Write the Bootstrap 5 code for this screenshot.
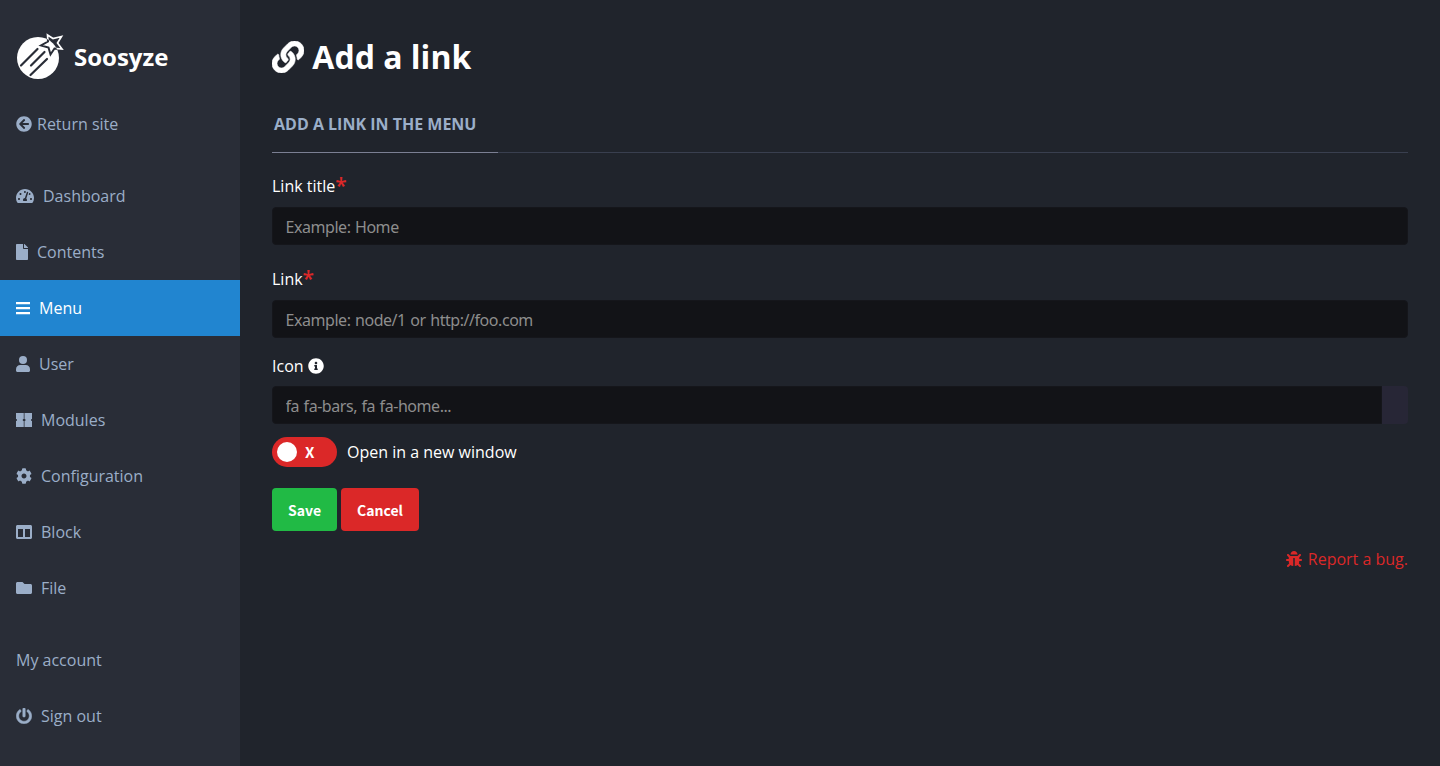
<!DOCTYPE html>
<html lang="en">
<head>
<meta charset="utf-8">
<title>Add a link - Soosyze</title>
<link href="https://cdn.jsdelivr.net/npm/bootstrap@5.3.0/dist/css/bootstrap.min.css" rel="stylesheet">
<style>
body{background:#20242c;color:#fff;font:16px/24px "Open Sans","Noto Sans",sans-serif;overflow:hidden}
.ic{height:1em;fill:currentColor;vertical-align:-.125em}
.side{width:240px;background:#292d37}
.brand{height:96px;padding-top:18px}
.brand-name{font-size:24px;margin-left:10px}
.side .nav-link{color:#9baec8;padding:16px;height:56px;line-height:24px;white-space:pre}
.side .nav-link.active{background:#2185d0;color:#fff}
.side .nav-link .ic{margin-right:9px}
.side .nav-link .ic-near{margin-right:5px}
h1{font-size:32px;line-height:48px;margin:33px 0 0}
.legend-tab{width:226px;height:48px;padding:7px 2px 0;border-bottom:1px solid #7b7f93;color:#9baec8;font-weight:700;margin-bottom:-1px}
.legend-row{border-bottom:1px solid #393f4f;margin-top:24px;height:48px}
.form-control,.form-control:focus{background:#121317;border:1px solid #15161b;border-radius:4px;height:38px;padding:7px 13px 5px 12.500px;color:#fff;font:16px/24px "Noto Sans",sans-serif;letter-spacing:-.45px;word-spacing:.8px}
.form-control::placeholder{color:#8d8d8d;opacity:1}
.req{color:#db2828;font-size:21px;font-weight:600;line-height:20px;vertical-align:-1px}
.field-label{line-height:24px;height:24px;display:block}
.pick{width:26px;background:#272636;border-radius:0 4px 4px 0}
.toggle{width:65px;height:30px;border-radius:15px;background:#db2828;padding:5px}
.knob{width:20px;height:20px;border-radius:50%;background:#fff}
.cross{font:bold 15px/20px "Noto Sans CJK JP",sans-serif;margin-left:8px}
.btn{height:43px;border:0;border-radius:4px;padding:1px 16px 0;font:bold 14px/20px "Noto Sans CJK JP",sans-serif}
.btn,.btn:hover{color:#fff}
.btn-save{background:#21ba45;width:65px}.btn-cancel{background:#db2828;width:78px}
.bug{color:#db2828}
.bug .ic{margin-right:2px}
</style>
</head>
<body>
<div class="d-flex vh-100">
<aside class="side flex-shrink-0">
  <div class="brand d-flex align-items-center px-3">
    <svg width="48" height="48" viewBox="0 0 48 48">
      <defs>
        <clipPath id="disc"><circle cx="22" cy="25" r="21"/></clipPath>
        <path id="star" d="M31.500 2 37 5.500 45.500 3.500 41.500 10 46 16 38.500 15.500 34.500 21.500 32.500 14.500 25 12.500 32 8.500Z"/>
      </defs>
      <use href="#star" fill="none" stroke="#fff" stroke-width="1.700"/>
      <circle cx="22" cy="25" r="21" fill="#fff"/>
      <g stroke="#292d37" stroke-width="2.200" stroke-linecap="round"><path d="M21.500 16 5 32.500M28.500 19 15 32.500M31 26 14.500 42"/></g>
      <use href="#star" fill="none" stroke="#292d37" stroke-width="2" clip-path="url(#disc)"/>
    </svg>
    <strong class="brand-name">Soosyze</strong>
  </div>
  <nav class="nav flex-column flex-nowrap">
    <a class="nav-link mb-3" href="#"><svg class="ic ic-near" viewBox="0 0 512 512"><path d="M256 504C119 504 8 393 8 256S119 8 256 8s248 111 248 248-111 248-248 248zm28.900-143.600L209.400 288H392c13.300 0 24-10.700 24-24v-16c0-13.300-10.700-24-24-24H209.400l75.500-72.400c9.700-9.300 9.900-24.800.400-34.300l-11-10.900c-9.400-9.400-24.600-9.400-33.900 0L107.700 239c-9.400 9.400-9.400 24.600 0 33.900l132.700 132.700c9.400 9.400 24.600 9.400 33.900 0l11-10.900c9.500-9.500 9.300-25-.400-34.300z"/></svg>Return site</a>
    <a class="nav-link" href="#"><svg class="ic" viewBox="0 0 576 512"><path d="M288 32C128.940 32 0 160.940 0 320c0 52.800 14.250 102.260 39.060 144.800 5.610 9.620 16.300 15.200 27.440 15.200h443c11.140 0 21.830-5.580 27.440-15.200C561.750 422.260 576 372.800 576 320c0-159.060-128.940-288-288-288zm0 64c14.710 0 26.580 10.130 30.320 23.650-1.110 2.260-2.640 4.230-3.450 6.670l-9.220 27.670c-5.130 3.490-10.970 6.010-17.640 6.010-17.670 0-32-14.330-32-32S270.330 96 288 96zM96 384c-17.670 0-32-14.330-32-32s14.330-32 32-32 32 14.330 32 32-14.330 32-32 32zm48-160c-17.670 0-32-14.330-32-32s14.330-32 32-32 32 14.330 32 32-14.330 32-32 32zm246.770-72.410l-61.330 184C343.130 347.330 352 364.540 352 384c0 11.720-3.380 22.550-8.880 32H232.880c-5.500-9.450-8.880-20.280-8.880-32 0-33.940 26.500-61.430 59.900-63.590l61.340-184.010c4.170-12.560 17.730-19.450 30.360-15.170 12.570 4.190 19.350 17.790 15.170 30.360zm14.660 57.200l15.520-46.550c3.470-1.290 7.130-2.230 11.050-2.230 17.670 0 32 14.330 32 32s-14.330 32-32 32c-11.380-.010-20.890-6.280-26.570-15.220zM480 384c-17.670 0-32-14.330-32-32s14.330-32 32-32 32 14.330 32 32-14.330 32-32 32z"/></svg>Dashboard</a>
    <a class="nav-link" href="#"><svg class="ic" viewBox="0 0 384 512"><path d="M224 136V0H24C10.700 0 0 10.700 0 24v464c0 13.300 10.700 24 24 24h336c13.300 0 24-10.700 24-24V160H248c-13.200 0-24-10.800-24-24zm160-14.100v6.100H256V0h6.100c6.400 0 12.500 2.500 17 7l97.900 98c4.500 4.500 7 10.600 7 16.900z"/></svg>Contents</a>
    <a class="nav-link active" href="#"><svg class="ic" viewBox="0 0 448 512"><path d="M0 60h448v72H0zM0 220h448v72H0zM0 380h448v72H0z"/></svg>Menu</a>
    <a class="nav-link" href="#"><svg class="ic" viewBox="0 0 448 512"><circle cx="224" cy="128" r="128"/><path d="M134 288h180c74 0 134 60 134 134v42c0 27-21 48-48 48H48c-27 0-48-21-48-48v-42c0-74 60-134 134-134z"/></svg>User</a>
    <a class="nav-link" href="#"><svg class="ic" viewBox="0 0 512 512"><path d="M0 32h248v190a34 34 0 0 0 0 68v190H0V290a34 34 0 0 0 0-68zM272 32h240v190a34 34 0 0 0 0 68v190H272V290a34 34 0 0 0 0-68z"/></svg>Modules</a>
    <a class="nav-link" href="#"><svg class="ic" viewBox="0 0 512 512"><path d="M487.400 315.700l-42.600-24.600c4.300-23.200 4.300-47 0-70.200l42.600-24.600c4.900-2.800 7.100-8.600 5.500-14-11.100-35.600-30-67.800-54.700-94.600-3.800-4.100-10-5.100-14.800-2.300L380.800 110c-17.900-15.400-38.500-27.300-60.800-35.100V25.800c0-5.600-3.900-10.500-9.400-11.700-36.700-8.200-74.300-7.800-109.200 0-5.500 1.200-9.400 6.100-9.400 11.700V75c-22.200 7.900-42.800 19.800-60.800 35.100L88.700 85.500c-4.900-2.800-11-1.900-14.800 2.300-24.700 26.700-43.600 58.900-54.700 94.600-1.700 5.400.600 11.200 5.500 14L67.300 221c-4.300 23.200-4.300 47 0 70.200l-42.600 24.600c-4.900 2.800-7.100 8.600-5.500 14 11.100 35.600 30 67.800 54.700 94.600 3.800 4.100 10 5.100 14.800 2.300l42.600-24.600c17.900 15.400 38.500 27.300 60.800 35.100v49.200c0 5.600 3.900 10.500 9.400 11.700 36.700 8.200 74.300 7.800 109.200 0 5.500-1.200 9.400-6.100 9.400-11.700v-49.200c22.200-7.900 42.800-19.800 60.800-35.100l42.600 24.600c4.900 2.800 11 1.900 14.800-2.300 24.700-26.700 43.600-58.900 54.700-94.600 1.500-5.500-.700-11.300-5.600-14.100zM256 336c-44.100 0-80-35.900-80-80s35.900-80 80-80 80 35.900 80 80-35.900 80-80 80z"/></svg>Configuration</a>
    <a class="nav-link" href="#"><svg class="ic" viewBox="0 0 512 512"><path d="M464 32H48C21.490 32 0 53.490 0 80v352c0 26.510 21.490 48 48 48h416c26.510 0 48-21.490 48-48V80c0-26.510-21.490-48-48-48zM224 416H64V160h160v256zm224 0H288V160h160v256z"/></svg>Block</a>
    <a class="nav-link mb-3" href="#"><svg class="ic" viewBox="0 0 512 512"><path d="M464 128H272l-64-64H48C21.490 64 0 85.490 0 112v288c0 26.510 21.490 48 48 48h416c26.510 0 48-21.490 48-48V176c0-26.510-21.490-48-48-48z"/></svg>File</a>
    <a class="nav-link" href="#">My account</a>
    <a class="nav-link" href="#"><svg class="ic" viewBox="0 0 512 512"><path stroke="currentColor" stroke-width="14" d="M400 54.100c63 45 104 118.600 104 201.900 0 136.800-110.800 247.700-247.500 248C120 504.300 8.200 393 8 256.400 7.900 173.100 48.900 99.300 111.800 54.200c11.700-8.300 28-4.800 35 7.700L162.600 90c5.900 10.500 3.100 23.800-6.600 31-41.500 30.800-68 79.600-68 134.900-.100 92.300 74.500 168.100 168 168.100 91.600 0 168.600-74.200 168-169.100-.300-51.800-24.700-101.800-68.100-134-9.700-7.200-12.400-20.500-6.500-30.900l15.800-28.100c7-12.400 23.200-16.100 34.800-7.800zM296 264V24c0-13.300-10.700-24-24-24h-32c-13.300 0-24 10.700-24 24v240c0 13.300 10.700 24 24 24h32c13.300 0 24-10.700 24-24z"/></svg>Sign out</a>
  </nav>
</aside>
<main class="flex-grow-1 px-4 mx-2">
  <h1 class="fw-bold"><svg class="ic" viewBox="0 0 512 512"><path stroke="currentColor" stroke-width="10" d="M326.612 185.391c59.747 59.809 58.927 155.698.360 214.590-.110.120-.240.250-.360.370l-67.200 67.200c-59.270 59.270-155.699 59.262-214.960 0-59.270-59.260-59.270-155.700 0-214.960l37.106-37.106c9.840-9.840 26.786-3.300 27.294 10.606.648 17.722 3.826 35.527 9.690 52.721 1.986 5.822.567 12.262-3.783 16.612l-13.087 13.087c-28.026 28.026-28.905 73.660-1.155 101.960 28.024 28.579 74.086 28.749 102.325.510l67.200-67.190c28.191-28.191 28.073-73.757 0-101.830-3.701-3.694-7.429-6.564-10.341-8.569a16.037 16.037 0 0 1-6.947-12.606c-.396-10.567 3.348-21.456 11.698-29.806l21.054-21.055c5.521-5.521 14.182-6.199 20.584-1.731a152.482 152.482 0 0 1 20.522 17.197zM467.547 44.449c-59.261-59.262-155.690-59.270-214.960 0l-67.200 67.200c-.120.120-.250.250-.360.370-58.566 58.892-59.387 154.781.360 214.590a152.454 152.454 0 0 0 20.521 17.196c6.402 4.468 15.064 3.789 20.584-1.731l21.054-21.055c8.350-8.350 12.094-19.239 11.698-29.806a16.037 16.037 0 0 0-6.947-12.606c-2.912-2.005-6.640-4.875-10.341-8.569-28.073-28.073-28.191-73.639 0-101.830l67.200-67.190c28.239-28.239 74.300-28.069 102.325.510 27.750 28.300 26.872 73.934-1.155 101.960l-13.087 13.087c-4.350 4.350-5.769 10.790-3.783 16.612 5.864 17.194 9.042 34.999 9.690 52.721.509 13.906 17.454 20.446 27.294 10.606l37.106-37.106c59.271-59.259 59.271-155.699.001-214.959z"/></svg> Add a link</h1>
  <div class="legend-row"><div class="legend-tab">ADD A LINK IN THE MENU</div></div>
  <form>
    <label class="field-label" for="t" style="margin-top:21px">Link title<span class="req">*</span></label>
    <input id="t" class="form-control" style="margin-top:9px" placeholder="Example: Home">
    <label class="field-label" for="l" style="margin-top:22px">Link<span class="req">*</span></label>
    <input id="l" class="form-control" style="margin-top:9px" placeholder="Example: node/1 or http://foo.com">
    <label class="field-label" for="i" style="margin-top:16px">Icon <svg class="ic" viewBox="0 0 512 512"><path d="M256 8C119.043 8 8 119.083 8 256c0 136.997 111.043 248 248 248s248-111.003 248-248C504 119.083 392.957 8 256 8zm0 110c23.196 0 42 18.804 42 42s-18.804 42-42 42-42-18.804-42-42 18.804-42 42-42zm56 254c0 6.627-5.373 12-12 12h-88c-6.627 0-12-5.373-12-12v-24c0-6.627 5.373-12 12-12h12v-64h-12c-6.627 0-12-5.373-12-12v-24c0-6.627 5.373-12 12-12h64c6.627 0 12 5.373 12 12v100h12c6.627 0 12 5.373 12 12v24z"/></svg></label>
    <div class="d-flex" style="margin-top:8px"><input id="i" class="form-control rounded-end-0" placeholder="fa fa-bars, fa fa-home..."><span class="pick flex-shrink-0"></span></div>
    <div class="d-flex align-items-center" style="margin-top:13px"><span class="toggle d-flex"><span class="knob"></span><span class="cross">X</span></span><span style="margin-left:10px">Open in a new window</span></div>
    <div class="d-flex gap-1" style="margin-top:21px"><button type="button" class="btn btn-save">Save</button><button type="button" class="btn btn-cancel">Cancel</button></div>
  </form>
  <div class="text-end bug" style="margin-top:16px"><svg class="ic" viewBox="0 0 512 512"><path d="M511.988 288.900c-.478 17.430-15.217 31.100-32.653 31.100H424v16c0 21.864-4.882 42.584-13.600 61.145l60.228 60.228c12.496 12.497 12.496 32.758 0 45.255-12.498 12.497-32.759 12.496-45.256 0l-54.736-54.736C345.886 467.965 314.351 480 280 480V236c0-6.627-5.373-12-12-12h-24c-6.627 0-12 5.373-12 12v244c-34.351 0-65.886-12.035-90.636-32.108l-54.736 54.736c-12.498 12.497-32.759 12.496-45.256 0-12.496-12.497-12.496-32.758 0-45.255l60.228-60.228C92.882 378.584 88 357.864 88 336v-16H32.666C15.230 320 .491 306.330.013 288.900-.484 270.816 14.028 256 32 256h56v-58.745l-46.628-46.628c-12.496-12.497-12.496-32.758 0-45.255 12.498-12.497 32.758-12.497 45.256 0L141.255 160h229.489l54.627-54.627c12.498-12.497 32.758-12.497 45.256 0 12.496 12.497 12.496 32.758 0 45.255L424 197.255V256h56c17.972 0 32.484 14.816 31.988 32.900zM257 0c-61.856 0-112 50.144-112 112h224C369 50.144 318.856 0 257 0z"/></svg> Report a bug.</div>
</main>
</div>
<script src="https://cdn.jsdelivr.net/npm/bootstrap@5.3.0/dist/js/bootstrap.bundle.min.js"></script>
</body>
</html>
